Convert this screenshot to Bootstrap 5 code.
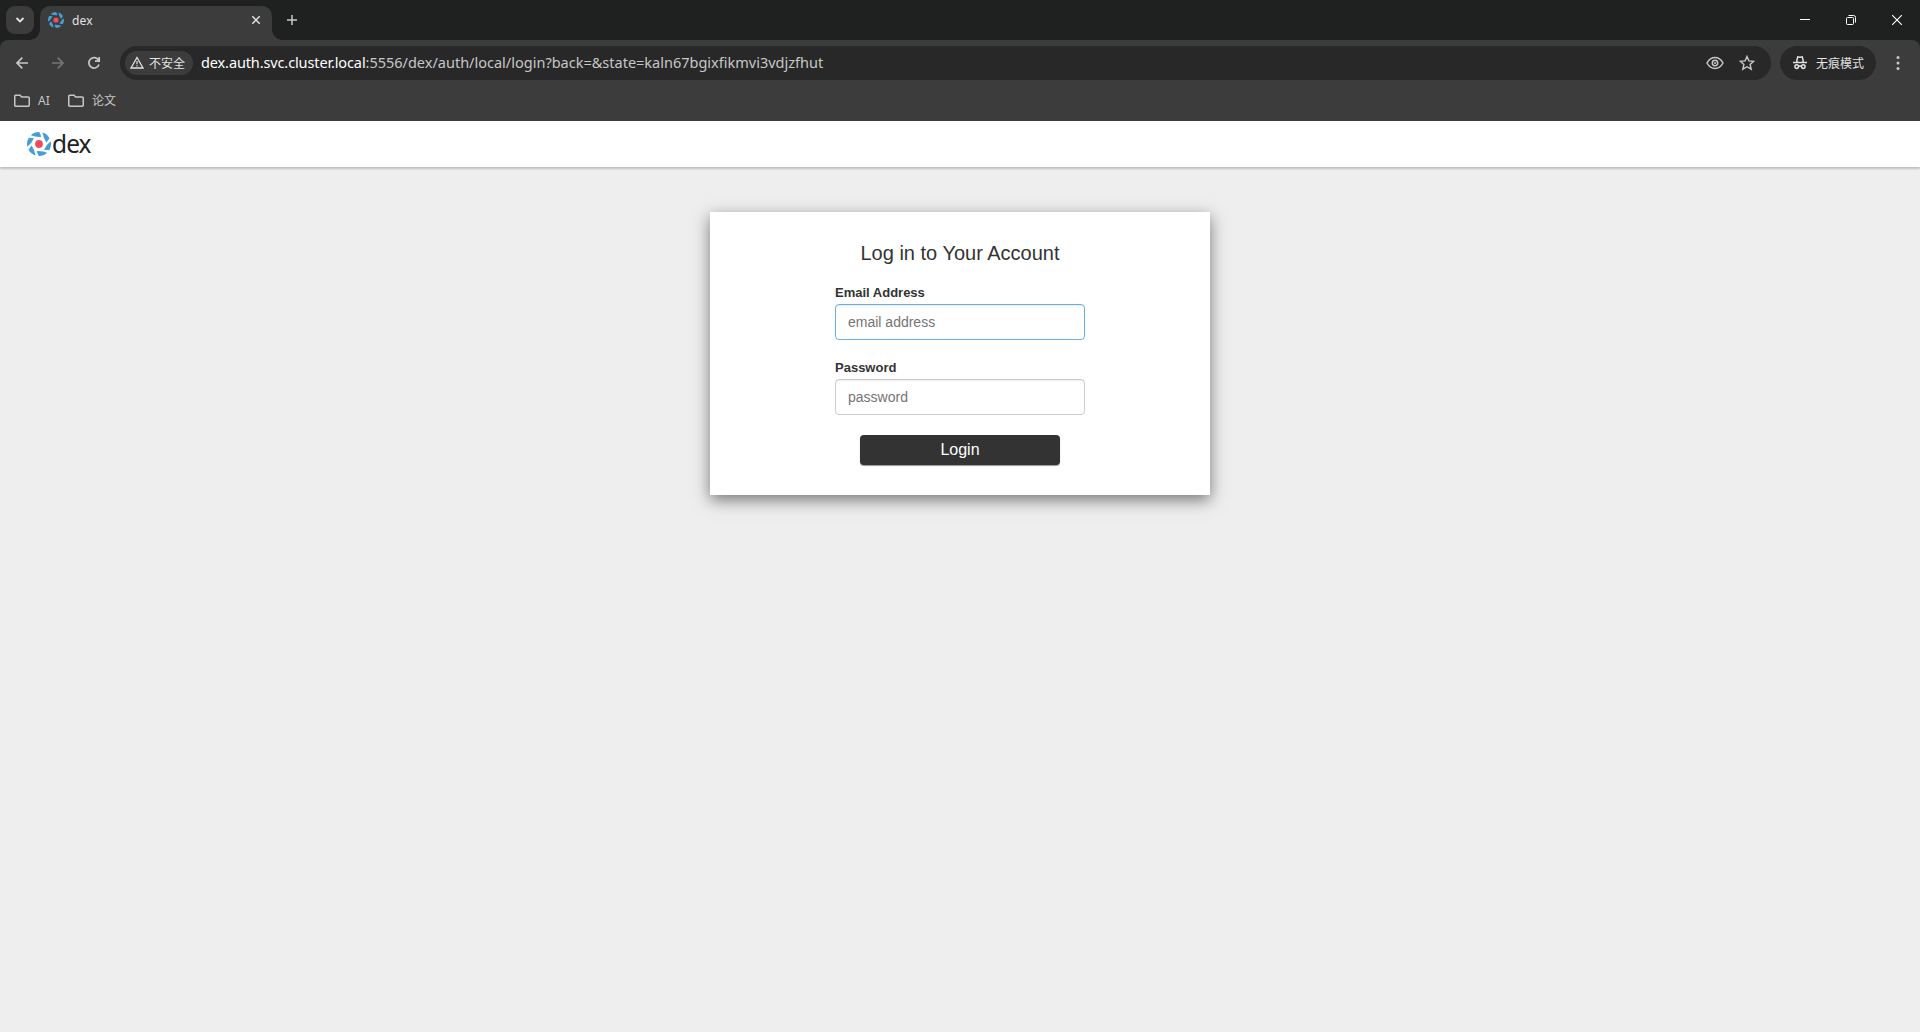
<!DOCTYPE html>
<html lang="zh-CN">
<head>
<meta charset="utf-8">
<title>dex</title>
<link href="https://cdn.jsdelivr.net/npm/bootstrap@5.3.0/dist/css/bootstrap.min.css" rel="stylesheet">
<style>
body{height:1032px;overflow:hidden;background:#eee;font-family:"Liberation Sans",sans-serif;color:#333}
svg{display:block;flex:none}
.chrome-ui{background:#3c3c3c;height:121px;font-family:"Noto Sans","Noto Sans CJK SC",sans-serif;color:#e3e3e3;font-size:12px;line-height:16px}
.tab-strip{height:40px;background:#1f2120;padding-left:6px}
.tab-search{width:28px;height:28px;border-radius:9px;background:#3c3c3c;margin:6px 6px 0 0}
.page-tab{width:232px;height:34px;margin-top:6px;background:#3c3c3c;border-radius:10px 10px 0 0;padding:0 10px 6px 8px;position:relative}
.page-tab::before,.page-tab::after{content:"";position:absolute;bottom:0;width:10px;height:10px}
.page-tab::before{left:-10px;background:radial-gradient(circle at 0 0,transparent 9.5px,#3c3c3c 10px)}
.page-tab::after{right:-10px;background:radial-gradient(circle at 100% 0,transparent 9.5px,#3c3c3c 10px)}
.tab-title{font-size:12px;margin-left:8px;padding-top:2px;letter-spacing:.2px}
.new-tab{margin:14px 0 0 14px}
.win-btn{width:46px;height:40px}
.strip-edge{background:#1f2120}
.toolbar{height:46px;padding-left:14px;background:#3c3c3c;border-radius:8px 8px 0 0}
.omnibox{height:34px;margin-top:6px;background:#282828;border-radius:17px;width:1651px;padding:0 16px 0 5px}
.insecure{height:24px;width:68px;border-radius:12px;background:#3c3c3c;padding-left:5px;gap:5px}
.insecure svg{margin-bottom:1px}
.insecure span,.incognito span{padding-top:1px}
.url-text{font-size:14.5px;margin-left:8px;padding-bottom:2px;color:#c7c7c7;white-space:nowrap}
.url-text span{color:#fff;letter-spacing:-.12px}
.star{margin-left:15px}
.incognito{width:96px;height:34px;margin:6px 0 0 9px;border-radius:17px;background:#282828;padding-left:12px;gap:8px}
.menu-dots{margin:15px 0 0 20px}
.bookmarks{height:35px;padding:0 14px 5px;color:#c7c7c7;gap:8px}
.bm-first{width:22px}
.dex-bar{height:46px;background:#fff;box-shadow:0 2px 2px rgba(0,0,0,.2);padding-left:27px;position:relative}
.dex-word{font:24.5px/46px "Noto Sans",sans-serif;color:#222;letter-spacing:-.9px;margin-left:1px}
.login-panel{width:500px;height:283px;margin:45px auto 0;background:#fff;box-shadow:0 5px 15px rgba(0,0,0,.5);padding-top:30px}
.login-title{font-size:20px;line-height:22px;font-weight:400;margin:0 0 21px;color:#333}
.field-row{width:250px;margin:0 auto 20px}
.field-row label{display:block;font-size:13px;font-weight:700;line-height:16px;height:19px}
.field-row .form-control{height:36px;font-size:14px;line-height:20px;padding:6px 12px;border:1px solid #ccc;border-radius:4px;color:#666;box-shadow:inset 0 1px 1px rgba(0,0,0,.075)}
.field-row .form-control::placeholder{color:#757575}
.field-row .is-focused{border-color:#66afe9}
.login-btn{display:block;width:200px;height:30px;margin:0 auto;padding:0 0 1px;font-size:16px;line-height:28px;background:#333;color:#fff;border:0;border-radius:4px;box-shadow:0 1px 1px rgba(0,0,0,.4)}
</style>
<script src="https://cdn.jsdelivr.net/npm/bootstrap@5.3.0/dist/js/bootstrap.bundle.min.js"></script>
</head>
<body>
<svg width="0" height="0" class="position-absolute">
<defs>
<path id="petal" d="M-8.200-8.700A12 12 0 0 1 .2-12L2.400-7.200Q-3-6.700-8.200-8.700Z"/>
<symbol id="dexmark" viewBox="-12 -12 24 24">
<g fill="#449fd8"><use href="#petal"/><use href="#petal" transform="rotate(60)"/><use href="#petal" transform="rotate(120)"/><use href="#petal" transform="rotate(180)"/><use href="#petal" transform="rotate(240)"/><use href="#petal" transform="rotate(300)"/></g>
<circle r="3.900" fill="#f04d5c"/>
</symbol>
<symbol id="folder" viewBox="0 0 16 14"><path d="M.75 2.200Q.75 1.250 1.700 1.250H6l1.700 1.700h6.600q.950 0 .950.950v7.400q0 .950-.950.950H1.700q-.950 0-.950-.950Z" fill="none" stroke="#c7c7c7" stroke-width="1.500"/></symbol>
</defs>
</svg>

<header class="chrome-ui">
  <div class="tab-strip d-flex">
    <div class="tab-search d-flex align-items-center justify-content-center"><svg width="10" height="8" viewBox="0 0 10 8"><path d="M1.500 2 5 5.500 8.500 2" fill="none" stroke="#e3e3e3" stroke-width="1.800"/></svg></div>
    <div class="page-tab d-flex align-items-center">
      <svg width="16" height="16"><use href="#dexmark"/></svg>
      <span class="tab-title">dex</span>
      <svg class="ms-auto" width="12" height="12" viewBox="0 0 12 12"><path d="m2.300 2.300 7.400 7.400m0-7.400-7.400 7.400" stroke="#e3e3e3" stroke-width="1.500"/></svg>
    </div>
    <svg class="new-tab" width="12" height="12" viewBox="0 0 12 12"><path d="M6 1v10M1 6h10" stroke="#c7c7c7" stroke-width="1.500"/></svg>
    <div class="d-flex ms-auto">
      <div class="win-btn d-flex align-items-center justify-content-center"><svg width="10" height="10"><path d="M0 4.500h10" stroke="#fff"/></svg></div>
      <div class="win-btn d-flex align-items-center justify-content-center"><svg width="10" height="10" viewBox="0 0 10 10"><g fill="none" stroke="#fff"><rect x=".5" y="2.500" width="7" height="7" rx="1"/><path d="M2.500.5h5q2 0 2 2v5"/></g></svg></div>
      <div class="win-btn d-flex align-items-center justify-content-center"><svg width="10" height="10"><path d="m0 0 10 10M10 0 0 10" stroke="#fff" stroke-width="1.100"/></svg></div>
    </div>
  </div>
  <div class="strip-edge">
  <div class="toolbar d-flex">
    <svg width="106" height="46" viewBox="14 40 106 46"><g fill="none" stroke-width="1.700"><path d="M28 63H17m5.300-5.300L17 63l5.300 5.300" stroke="#c7c7c7"/><path d="M52 63h11m-5.300-5.300L63 63l-5.300 5.300" stroke="#757575"/><path d="M98.600 60.300A5.200 5.200 0 1 0 99 64.500M99.200 57v4.200H95" stroke="#c7c7c7"/></g></svg>
    <div class="omnibox d-flex align-items-center">
      <div class="insecure d-flex align-items-center"><svg width="14" height="13" viewBox="0 0 14 13"><path d="M7 1.500 13 12H1Z" fill="none" stroke="#e3e3e3" stroke-width="1.300"/><path d="M7 5v3.300m0 1v1.300" stroke="#e3e3e3" stroke-width="1.200"/></svg><span>不安全</span></div>
      <div class="url-text"><span>dex.auth.svc.cluster.local</span>:5556/dex/auth/local/login?back=&amp;state=kaln67bgixfikmvi3vdjzfhut</div>
      <svg class="ms-auto" width="18" height="14" viewBox="0 0 18 14"><g fill="none" stroke="#c7c7c7" stroke-width="1.500"><path d="M1 7Q4 1.500 9 1.500T17 7Q14 12.500 9 12.500T1 7Z"/><circle cx="9" cy="7" r="2.700"/></g><circle cx="9" cy="7" r="1" fill="#c7c7c7"/></svg>
      <svg class="star" width="16" height="16" viewBox="0 0 16 16"><path d="m8 1.500 1.900 4.400 4.800.4-3.600 3.200 1.100 4.700L8 11.700l-4.200 2.500 1.100-4.700L1.300 6.300l4.800-.4Z" fill="none" stroke="#c7c7c7" stroke-width="1.400"/></svg>
    </div>
    <div class="incognito d-flex align-items-center"><svg width="16" height="16" viewBox="0 0 16 16"><g fill="none" stroke="#e3e3e3" stroke-width="1.500"><path d="M1 7.500h14M4.900 7.500V5l.9-3.200 2.200.5 2.200-.5.9 3.200v2.500M6.500 11.300q1.500-.6 3 0"/><circle cx="4.700" cy="11.600" r="1.800"/><circle cx="11.300" cy="11.600" r="1.800"/></g></svg><span>无痕模式</span></div>
    <svg class="menu-dots" width="4" height="16" viewBox="0 0 4 16"><g fill="#c7c7c7"><circle cx="2" cy="2.500" r="1.500"/><circle cx="2" cy="8" r="1.500"/><circle cx="2" cy="13.500" r="1.500"/></g></svg>
  </div>
  </div>
  <div class="bookmarks d-flex align-items-center">
    <svg width="16" height="14"><use href="#folder"/></svg><span class="bm-first">AI</span>
    <svg width="16" height="14"><use href="#folder"/></svg><span>论文</span>
  </div>
</header>

<nav class="dex-bar d-flex align-items-center">
  <svg width="24" height="24"><use href="#dexmark"/></svg><span class="dex-word">dex</span>
</nav>

<main class="login-panel">
  <h2 class="login-title text-center">Log in to Your Account</h2>
  <form>
    <div class="field-row"><label for="login">Email Address</label><input id="login" class="form-control is-focused" placeholder="email address"></div>
    <div class="field-row"><label for="password">Password</label><input id="password" type="password" class="form-control" placeholder="password"></div>
    <button type="button" class="btn login-btn">Login</button>
  </form>
</main>
</body>
</html>
